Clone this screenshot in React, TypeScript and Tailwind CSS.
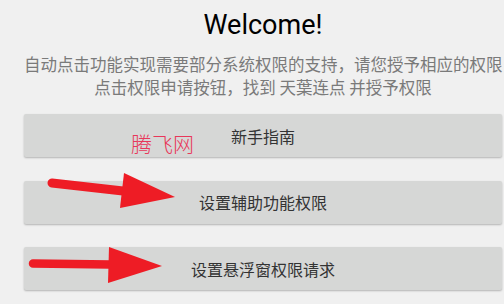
import React from 'react'

const BUTTONS = ['新手指南', '设置辅助功能权限', '设置悬浮窗权限请求']

const cjk = { fontFamily: '"Noto Sans CJK SC", "Noto Sans", sans-serif' }

export default function App() {
  return (
    <div className="relative w-[504px] h-[304px] overflow-hidden bg-[#f0f0f0]">
      <div className="flex flex-col pl-[24px] pr-[2px] pt-[9px]">
        <h1
          className="text-center text-[27px] leading-[32px] text-black"
          style={{ fontFamily: 'Roboto, "Liberation Sans", sans-serif' }}
        >
          Welcome!
        </h1>
        <p
          className="mt-[12px] text-center text-[16.5px] leading-[23px] text-[#7a7a7a] whitespace-nowrap"
          style={cjk}
        >
          自动点击功能实现需要部分系统权限的支持，请您授予相应的权限
          <br />
          点击权限申请按钮，找到 天葉连点 并授予权限
        </p>
        <div className="mt-[15px] flex flex-col gap-[23.5px]">
          {BUTTONS.map((label) => (
            <button
              key={label}
              className="h-[43px] w-full rounded-[2px] bg-[#d6d7d6] text-[16px] text-[#333] shadow-[0_1px_2px_rgba(0,0,0,0.25)]"
              style={cjk}
            >
              {label}
            </button>
          ))}
        </div>
      </div>

      {/* watermark */}
      <span
        className="absolute left-[131px] top-[130px] text-[21px] leading-[27px] font-light text-[#e8375a]"
        style={cjk}
      >
        腾飞网
      </span>

      {/* red arrows drawn over the screenshot */}
      <svg className="pointer-events-none absolute inset-0" width="504" height="304" viewBox="0 0 504 304">
        <line x1="52" y1="183" x2="123" y2="191" stroke="#ee1c25" strokeWidth="9" strokeLinecap="round" />
        <polygon points="124,173 175,197 120,208" fill="#ee1c25" />
        <line x1="33" y1="263.5" x2="110" y2="264.5" stroke="#ee1c25" strokeWidth="8.5" strokeLinecap="round" />
        <polygon points="109,247 162,266 108,283" fill="#ee1c25" />
      </svg>
    </div>
  )
}
